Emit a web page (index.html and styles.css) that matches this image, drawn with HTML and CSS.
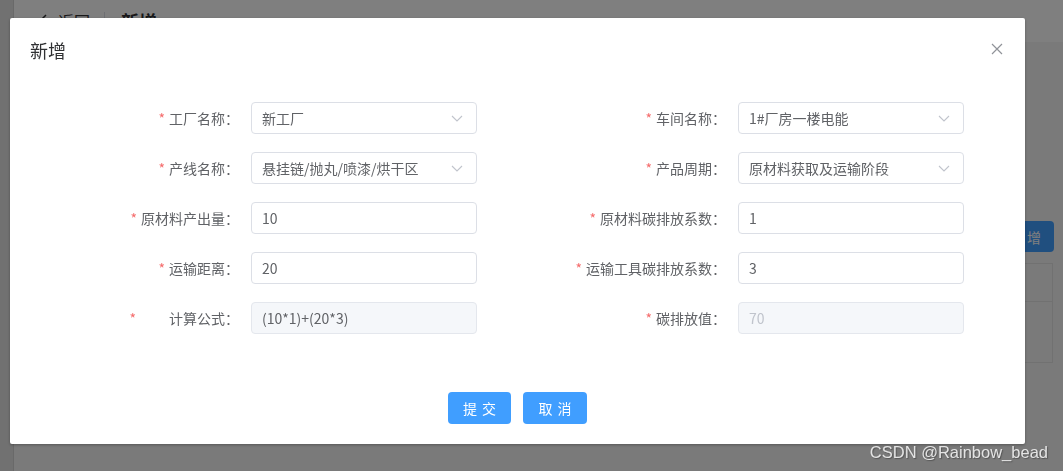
FILE: index.html
```html
<!DOCTYPE html>
<html lang="zh-CN">
<head>
<meta charset="utf-8">
<title>新增</title>
<link rel="stylesheet" href="styles.css">
</head>
<body>
<div class="page">
  <aside class="side"></aside>
  <main class="main">
    <header class="topbar">
      <span class="back"><svg class="back-ico" viewBox="0 0 10 14" width="10" height="14"><path d="M8 1 L2 7 L8 13" fill="none" stroke="#303133" stroke-width="1.5"/></svg>返回</span>
      <span class="divider"></span>
      <span class="ptitle">新增</span>
    </header>
    <section class="content">
      <div class="toolbar"><span class="bg-btn">新增</span></div>
      <div class="table">
        <div class="tr"></div>
        <div class="tr tall"></div>
      </div>
    </section>
  </main>
</div>

<div class="overlay">
  <div class="dialog">
    <div class="dlg-header">
      <span class="dlg-title">新增</span>
      <svg class="close" viewBox="0 0 12 12" width="12" height="12"><path d="M1 1 L11 11 M11 1 L1 11" stroke="#909399" stroke-width="1.2" fill="none"/></svg>
    </div>
    <div class="dlg-body">
      <div class="grid">
        <div class="item">
          <label class="lbl"><span class="req">*</span>工厂名称：</label>
          <div class="input select"><span>新工厂</span><svg class="arrow" viewBox="0 0 12 7" width="12" height="7"><path d="M1 1 L6 6 L11 1" fill="none" stroke="#c0c4cc" stroke-width="1.1"/></svg></div>
        </div>
        <div class="item">
          <label class="lbl"><span class="req">*</span>车间名称：</label>
          <div class="input select"><span>1#厂房一楼电能</span><svg class="arrow" viewBox="0 0 12 7" width="12" height="7"><path d="M1 1 L6 6 L11 1" fill="none" stroke="#c0c4cc" stroke-width="1.1"/></svg></div>
        </div>
        <div class="item">
          <label class="lbl"><span class="req">*</span>产线名称：</label>
          <div class="input select"><span>悬挂链/抛丸/喷漆/烘干区</span><svg class="arrow" viewBox="0 0 12 7" width="12" height="7"><path d="M1 1 L6 6 L11 1" fill="none" stroke="#c0c4cc" stroke-width="1.1"/></svg></div>
        </div>
        <div class="item">
          <label class="lbl"><span class="req">*</span>产品周期：</label>
          <div class="input select"><span>原材料获取及运输阶段</span><svg class="arrow" viewBox="0 0 12 7" width="12" height="7"><path d="M1 1 L6 6 L11 1" fill="none" stroke="#c0c4cc" stroke-width="1.1"/></svg></div>
        </div>
        <div class="item">
          <label class="lbl"><span class="req">*</span>原材料产出量：</label>
          <div class="input"><span>10</span></div>
        </div>
        <div class="item">
          <label class="lbl"><span class="req">*</span>原材料碳排放系数：</label>
          <div class="input"><span>1</span></div>
        </div>
        <div class="item">
          <label class="lbl"><span class="req">*</span>运输距离：</label>
          <div class="input"><span>20</span></div>
        </div>
        <div class="item">
          <label class="lbl"><span class="req">*</span>运输工具碳排放系数：</label>
          <div class="input"><span>3</span></div>
        </div>
        <div class="item">
          <label class="lbl"><span class="req wide">*</span>计算公式：</label>
          <div class="input readonly"><span>(10*1)+(20*3)</span></div>
        </div>
        <div class="item">
          <label class="lbl"><span class="req">*</span>碳排放值：</label>
          <div class="input disabled"><span>70</span></div>
        </div>
      </div>
    </div>
    <div class="dlg-footer">
      <button class="btn">提交</button>
      <button class="btn">取消</button>
    </div>
  </div>
</div>

<div class="watermark">CSDN @Rainbow_bead</div>
</body>
</html>
```

FILE: styles.css
```css
* { box-sizing: border-box; }
html, body { margin: 0; padding: 0; }
body {
  width: 1063px;
  height: 471px;
  overflow: hidden;
  font-family: "Noto Sans CJK SC", "Noto Sans", sans-serif;
  font-size: 14px;
  color: #606266;
  background: #f4f4f4;
}

.page {
  display: flex;
  height: 471px;
}
.side {
  width: 14px;
  background: #e2e2e2;
  border-right: 1px solid #d2d2d2;
}
.main {
  flex: 1;
  display: flex;
  flex-direction: column;
  background: #f4f4f4;
}
.topbar {
  height: 42px;
  background: #fff;
  display: flex;
  align-items: center;
  padding-left: 24px;
  color: #303133;
}
.back { display: flex; align-items: center; gap: 10px; font-size: 16px; }
.back-ico { display: block; }
.divider { width: 1px; height: 18px; background: #dcdfe6; margin: 0 16px 0 14px; }
.ptitle { font-size: 18px; font-weight: 700; }

.content {
  flex: 1;
  margin: 12px 9px 0 12px;
  padding: 167px 0 0 0;
}
.toolbar { display: flex; justify-content: flex-end; }
.bg-btn {
  width: 54px;
  height: 31px;
  background: #409eff;
  color: #fff;
  border-radius: 4px;
  display: flex;
  align-items: center;
  justify-content: center;
  letter-spacing: 2px;
}
.table {
  margin: 11px 1px 0 0;
  border: 1px solid #e2e2e2;
}
.tr { height: 38px; border-bottom: 1px solid #e2e2e2; }
.tr.tall { height: 60px; border-bottom: none; }

.overlay {
  position: fixed;
  inset: 0;
  background: rgba(0, 0, 0, 0.5);
  padding: 18px 0 0 10px;
}
.dialog {
  width: 1015px;
  background: #fff;
  border-radius: 2px;
  box-shadow: 0 1px 3px rgba(0, 0, 0, 0.3);
}
.dlg-header {
  padding: 20px 20px 10px;
  display: flex;
  justify-content: space-between;
  align-items: center;
  height: 54px;
}
.dlg-title {
  font-size: 18px;
  line-height: 24px;
  color: #303133;
}
.close { margin-right: 2px; margin-top: -2px; }

.dlg-body { padding: 30px 20px 30px; }
.grid {
  display: grid;
  grid-template-columns: 487px 488px;
}
.item {
  display: flex;
  align-items: center;
  margin-bottom: 18px;
  height: 32px;
}
.lbl {
  width: 221px;
  padding-right: 12px;
  display: flex;
  justify-content: flex-end;
  align-items: center;
  line-height: 32px;
  color: #606266;
  white-space: nowrap;
}
.req { color: #f56c6c; margin-right: 4px; }
.req.wide { margin-right: 33px; }
.input {
  width: 226px;
  height: 32px;
  border: 1px solid #dcdfe6;
  border-radius: 4px;
  display: flex;
  align-items: center;
  justify-content: space-between;
  padding: 0 13px 0 10px;
  color: #606266;
  white-space: nowrap;
}
.input.readonly { background: #f5f7fa; border-color: #e4e7ed; }
.input.disabled { background: #f5f7fa; border-color: #e4e7ed; color: #c0c4cc; }
.arrow { display: block; }

.dlg-footer {
  padding: 10px 20px 20px;
  display: flex;
  justify-content: center;
  gap: 12px;
}
.btn {
  width: 63px;
  height: 32px;
  border: none;
  border-radius: 4px;
  background: #409eff;
  color: #fff;
  font-family: "Noto Sans CJK SC", sans-serif;
  font-size: 14px;
  letter-spacing: 5px;
  padding: 0 0 0 5px;
}
.btn + .btn { width: 64px; }

.watermark {
  position: fixed;
  right: 15px;
  bottom: 9px;
  font-family: "Liberation Sans", Arial, sans-serif;
  font-size: 16.5px;
  color: #e4e4e4;
  text-shadow: 1px 1px 1px #555;
}
```
